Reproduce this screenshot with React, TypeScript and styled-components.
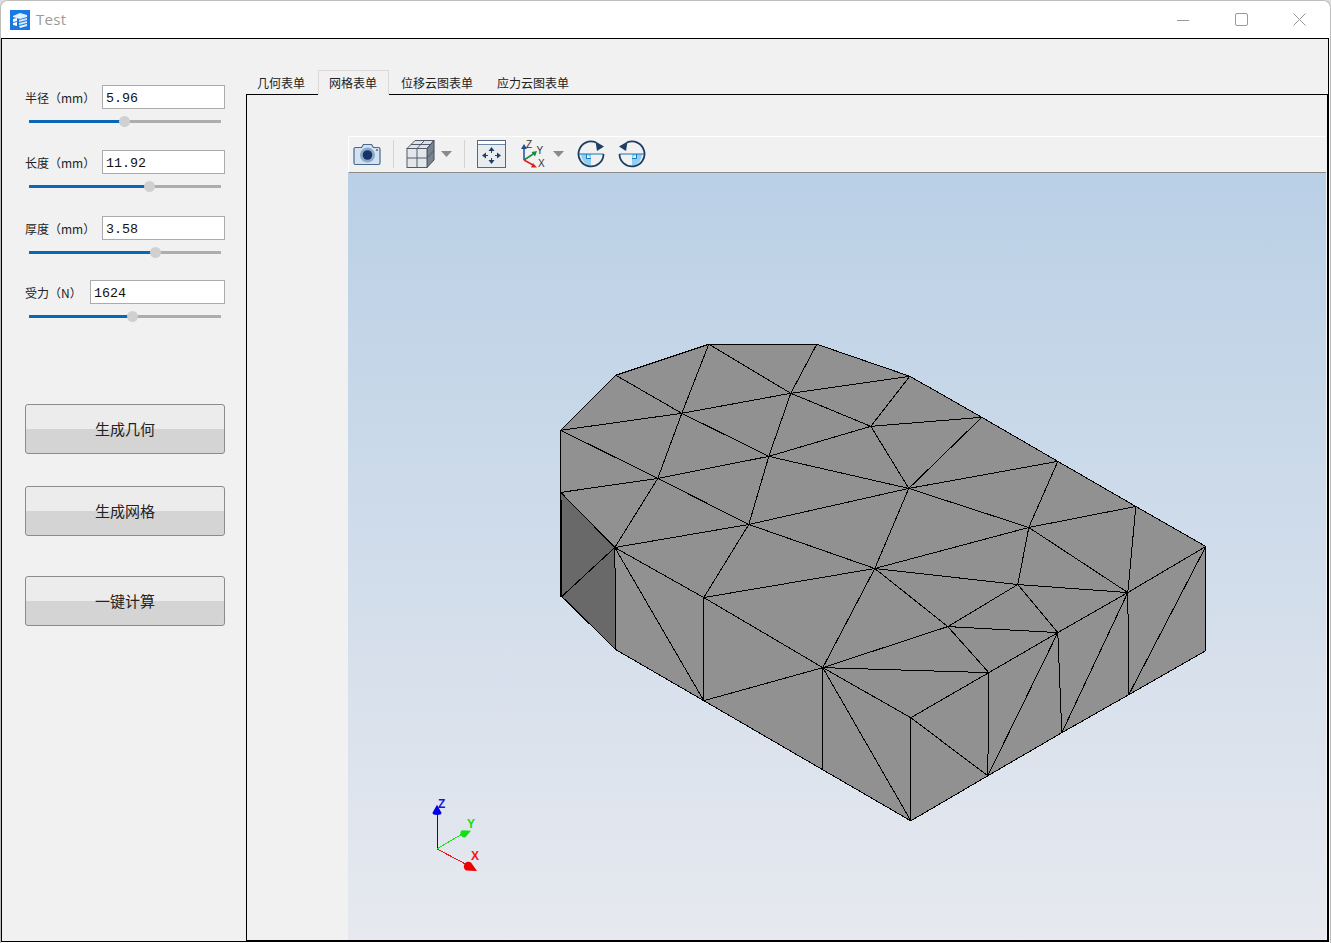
import React from 'react';
import styled, { createGlobalStyle } from 'styled-components';

const Global = createGlobalStyle`
  html, body { margin: 0; padding: 0; background: #dcdcdc; }
  body { font-family: "Noto Sans CJK SC", "Noto Sans", sans-serif; overflow: hidden; }
`;

const Win = styled.div`
  width: 1331px; height: 943px; box-sizing: border-box;
  display: flex; flex-direction: column;
  background: #fff; border: 1px solid #bdbdbd; border-bottom: 0;
  border-radius: 8px 8px 0 0; overflow: hidden;
`;
const TitleBar = styled.div`
  height: 37px; flex: none; display: flex; align-items: center; padding-left: 9px; background: #fff;
`;
const AppTitle = styled.span`
  font-family: "Open Sans", "Noto Sans", sans-serif; font-size: 15px; color: #9b9b9b; margin: 0 0 2px 6px; letter-spacing: .3px;
`;
const WinButtons = styled.div`
  margin-left: auto; display: flex; margin-right: 1px;
`;
const WinBtn = styled.div`
  width: 58.5px; height: 35px; display: flex; align-items: center; justify-content: center;
  svg { display: block; }
`;
const Body = styled.div`
  flex: 1; min-height: 0; display: flex; background: #f1f1f1;
  border: 1px solid #000; margin-bottom: 1px; margin-right: 1px;
`;
const Side = styled.div`
  width: 243px; flex: none; box-sizing: border-box; padding: 46px 20px 0 23px; display: flex; flex-direction: column;
`;
const Group = styled.div<{ $mt: number }>`
  margin-top: ${p => p.$mt}px;
`;
const FieldRow = styled.div`
  display: flex; align-items: center; height: 24px;
`;
const Label = styled.label<{ $w: number }>`
  width: ${p => p.$w}px; flex: none; font-size: 12px; color: #222; white-space: nowrap; line-height: 24px; padding-top: 2px;
`;
const Input = styled.input`
  flex: 1; min-width: 0; height: 24px; box-sizing: border-box; border: 1px solid #ababab; background: #fff;
  font-family: "Liberation Mono", monospace; font-size: 13.33px; color: #111; padding: 3px 3px 0; outline: none; border-radius: 0;
`;
const SliderWrap = styled.div`
  height: 24px; position: relative; margin: 0 4px; display: flex; align-items: center;
`;
const Track = styled.div`
  width: 100%; height: 3px; background: #adadad;
`;
const Fill = styled.div`
  height: 3px; background: #0a66b7;
`;
const Thumb = styled.div`
  position: absolute; top: 7px; width: 11px; height: 11px; margin-left: -5px; border-radius: 50%;
  background: #d0d0d0;
`;
const ActionBtn = styled.button<{ $mt: number }>`
  margin-top: ${p => p.$mt}px; height: 50px; width: 200px; box-sizing: border-box; flex: none;
  border: 1px solid #8b8b8b; border-radius: 3px; padding: 0 0 1px;
  background: linear-gradient(#ececec 0, #ececec 51%, #d4d4d4 51%, #d4d4d4 100%);
  font-family: "Noto Sans CJK SC", sans-serif; font-size: 15px; color: #222; font-weight: 400; line-height: 47px;
`;
const Right = styled.div`
  flex: 1; min-width: 0; display: flex; flex-direction: column; padding-top: 31px;
`;
const TabBar = styled.div`
  display: flex; height: 25px; flex: none; align-items: flex-end; position: relative; z-index: 1;
`;
const Tab = styled.div<{ $active?: boolean }>`
  height: 25px; box-sizing: border-box; padding: 0 ${p => (p.$active ? '11px 0 10px' : '12px')};
  margin-left: ${p => (p.$active ? 1 : 0)}px;
  font-size: 12px; color: #222; line-height: ${p => (p.$active ? 24 : 26)}px; white-space: nowrap;
  ${p => (p.$active ? 'border: 1px solid #d9d9d9; border-bottom: 1px solid #f1f1f1; background: #f1f1f1;' : '')}
`;
const Pane = styled.div`
  flex: 1; min-height: 0; margin-left: 1px; margin-top: -1px; border: 1px solid #000;
  padding: 41px 1px 0 101px; display: flex; flex-direction: column; background: #f1f1f1;
`;
const Toolbar = styled.div`
  height: 37px; flex: none; box-sizing: border-box; display: flex; align-items: center; padding: 0 0 2px 4px;
  background: #f1f1f1; border-top: 1px solid #fff; border-left: 1px solid #fff; border-bottom: 1px solid #8a8a8a;
`;
const Tool = styled.svg<{ $ml: number; $w: number }>`
  display: block; flex: none; width: ${p => p.$w}px; height: 30px; margin-left: ${p => p.$ml}px;
`;
const ToolSep = styled.div<{ $ml: number }>`
  width: 1px; height: 28px; flex: none; background: #d4d4d4; margin-left: ${p => p.$ml}px;
`;
const Canvas = styled.div`
  flex: 1; min-height: 0; background: linear-gradient(#bad0e6 0%, #e7e9ef 100%);
  svg { display: block; width: 100%; height: 100%; }
`;

type Pt = [number, number];
const V: Record<string, Pt> = {
  A: [561, 430], B: [616, 375], C: [709, 344], D: [817, 344], E: [910, 376], F: [982, 417], G: [1058, 461], H: [1136, 506], I: [1206, 546],
  J: [1206, 650], K: [1129, 694], L: [1062, 732], M: [988, 775], N: [911, 820], O: [823, 769], P: [704, 700], Q: [616, 649], R: [562, 596], S: [561, 492],
  a: [682, 413], b: [791, 393], c: [871, 426], d: [769, 456], e: [658, 478], f: [749, 524], g: [615, 547], h: [875, 568],
  i: [909, 488], j: [1029, 527], k: [1018, 584], l: [1128, 592], m: [704, 597], n: [948, 626], o: [1058, 632], p: [823, 667], q: [989, 672], r: [911, 717],
};
const EDGES = 'B-a C-a C-b D-b E-b A-a a-b b-c E-c c-F b-d a-d c-d c-i F-i d-i G-i G-j H-j i-j a-e d-e A-e S-e d-f e-f e-g S-g g-f i-f i-h f-h f-m g-m m-h h-j h-k j-k j-l k-l H-l I-l h-n h-p p-m p-n k-n k-o n-o n-q l-o o-q p-q p-r q-r g-Q g-P m-P P-p p-O p-N r-N r-M q-M o-M o-L l-L l-K I-K I-J g-R'
  .split(' ').map(s => s.split('-'));
const poly = (ks: string) => ks.split(' ').map(k => V[k].join(',')).join(' ');

const Mesh = () => (
  <svg viewBox="348 173 978 766" preserveAspectRatio="none">
    <g shapeRendering="crispEdges" transform="translate(-0.2 0)">
      <polygon points={poly('A B C D E F G H I J K L M N O P Q g S')} fill="#919191" stroke="#000" />
      <polygon points={poly('S g Q R')} fill="#696969" stroke="#000" />
      <line x1="560.6" y1="430" x2="560.6" y2="596" stroke="#000" />
      <line x1="561.6" y1="500" x2="561.6" y2="570" stroke="#000" />
      {EDGES.map(([a, b]) => (
        <line key={a + b} x1={V[a][0]} y1={V[a][1]} x2={V[b][0]} y2={V[b][1]} stroke="#000" />
      ))}
    </g>
    <g shapeRendering="crispEdges">
      <line x1="437" y1="848" x2="437" y2="812" stroke="#0000e6" />
      <line x1="437" y1="848" x2="464" y2="832" stroke="#19e619" />
      <line x1="437" y1="848" x2="469" y2="865" stroke="#e61919" />
    </g>
    <path d="M437 804 L441.5 812 A4.5 2.2 0 0 1 432.5 812 Z" fill="#0000e6" />
    <path d="M471 830 L465.5 836.5 A4 4 0 0 1 462 829.5 Z" fill="#12e012" />
    <path d="M477 870 L466 869.5 A4.5 4.5 0 0 1 471 861.5 Z" fill="#ee0000" />
    <g fontFamily="Liberation Sans, sans-serif" fontWeight="700" fontSize="12">
      <text x="438" y="807" fill="#1414e0">Z</text>
      <text x="467" y="827" fill="#14dc14">Y</text>
      <text x="471" y="859" fill="#f01414">X</text>
    </g>
  </svg>
);

const Logo = () => (
  <svg width="20" height="20" viewBox="0 0 20 20">
    <rect width="20" height="20" fill="#1a78e2" />
    <polygon points="3,6 10,3 17,5 17,7 10,9 3,7" fill="#dff0ff" />
    <polygon points="3,9 7,8 7,11 3,12" fill="#fff" />
    <polygon points="9,10 17,8 17,10 9,12" fill="#cfe6ff" />
    <polygon points="3,13 7,12 7,16 3,15" fill="#fff" />
    <polygon points="9,13 17,11 17,13 9,15" fill="#cfe6ff" />
    <polygon points="9,16 17,14 17,16 10,18" fill="#eaf4ff" />
  </svg>
);

const Camera = () => (
  <Tool $ml={0} $w={29} viewBox="0 0 29 30">
    <path d="M2.5 8.5 h6 l2 -3 h8 l2 3 h5 a1.5 1.5 0 0 1 1.5 1.5 v14 a1.5 1.5 0 0 1 -1.5 1.5 h-23 a1.5 1.5 0 0 1 -1.5 -1.5 v-14 a1.5 1.5 0 0 1 1.5 -1.5z" fill="#d3e2f1" stroke="#48688f" strokeWidth="1.2" />
    <circle cx="14.5" cy="16" r="7.5" fill="#8ea9c8" />
    <circle cx="14.5" cy="16" r="4.8" fill="#17346a" />
    <circle cx="24" cy="11" r="1" fill="#48688f" />
  </Tool>
);
const Cube = () => (
  <Tool $ml={12} $w={29} viewBox="0 0 29 30">
    <polygon points="1,9.5 9,1.5 28,1.5 21,9.5" fill="#dfe3e8" stroke="#505a68" />
    <polygon points="21,9.5 28,1.5 28,21 21,28.5" fill="#77838f" stroke="#414b58" />
    <rect x="1" y="9.5" width="20" height="19" fill="#e4e7ea" stroke="#505a68" />
    <path d="M11 9.5 V28.5 M1 19 H21 M11 9.5 L18.5 1.5 M5 5.5 H24.5 M21 19 L28 11.5" fill="none" stroke="#505a68" />
  </Tool>
);
const Drop = ({ ml }: { ml: number }) => (
  <Tool $ml={ml} $w={11} viewBox="0 0 11 30">
    <polygon points="0,12 11,12 5.5,18" fill="#8a8a8a" />
  </Tool>
);
const Fit = () => (
  <Tool $ml={12} $w={29} viewBox="0 0 29 30" shapeRendering="crispEdges">
    <rect x="0.5" y="1.5" width="28" height="27" fill="#e9ecef" stroke="#4f6987" />
    <rect x="1" y="2" width="27" height="3" fill="#fff" />
    <line x1="1" y1="5.5" x2="28" y2="5.5" stroke="#6f86a1" />
    <g fill="#1d3d6b" shapeRendering="auto">
      <polygon points="14.5,8 17.5,12 11.5,12" /><polygon points="14.5,25 17.5,21 11.5,21" />
      <polygon points="5,16.5 9,13.5 9,19.5" /><polygon points="24,16.5 20,13.5 20,19.5" />
      <rect x="14" y="12" width="1" height="2" /><rect x="14" y="19" width="1" height="2" />
      <rect x="9" y="16" width="2" height="1" /><rect x="18" y="16" width="2" height="1" />
    </g>
  </Tool>
);
const Triad = () => (
  <Tool $ml={15} $w={26} viewBox="0 0 26 30">
    <path d="M3 21 V9" stroke="#1f4e9c" strokeWidth="1.5" fill="none" />
    <polygon points="3,5 6,10 0,10" fill="#1f4e9c" />
    <path d="M3 21 L13 14.5" stroke="#1a8a3c" strokeWidth="1.5" fill="none" />
    <polygon points="16,12 14,17.5 10.5,13" fill="#1a8a3c" />
    <path d="M3 21 L12 26" stroke="#e02020" strokeWidth="1.5" fill="none" />
    <polygon points="16,28.5 10,28.5 12,24" fill="#e02020" />
    <g fontFamily="Liberation Sans, sans-serif" fontSize="10" fill="#333">
      <text x="5" y="9">Z</text><text x="15.5" y="14.5">Y</text><text x="17" y="28">X</text>
    </g>
  </Tool>
);
const Rotate = ({ ml, flip }: { ml: number; flip?: boolean }) => (
  <Tool $ml={ml} $w={28} viewBox="0 0 28 30">
    <g transform={flip ? 'translate(28 0) scale(-1 1)' : undefined}>
      <path d="M4 15 H14 V27.5 A12.5 12.5 0 0 1 4 15z" fill="#8fd0f2" />
      <path d="M9.5 15 V19.5 H14" fill="#e6f5fd" stroke="#1278b8" strokeWidth="1" />
      <path d="M1.5 15 H26.5" stroke="#1278b8" strokeWidth="1" fill="none" />
      <path d="M26.5 15 A12.5 12.5 0 1 1 19 3.5" stroke="#1f3e63" strokeWidth="1.8" fill="none" />
      <polygon points="18.5,2.5 27,7.5 20,12" fill="#1f3e63" />
    </g>
  </Tool>
);

const FIELDS = [
  { label: '半径（mm）', value: '5.96', w: 77, mt: 0, pct: 49.6 },
  { label: '长度（mm）', value: '11.92', w: 77, mt: 17, pct: 62.5 },
  { label: '厚度（mm）', value: '3.58', w: 77, mt: 18, pct: 65.6 },
  { label: '受力（N）', value: '1624', w: 65, mt: 16, pct: 53.8 },
];
const ACTIONS = [
  { t: '生成几何', mt: 76 }, { t: '生成网格', mt: 32 }, { t: '一键计算', mt: 40 },
];

export default function App() {
  return (
    <Win>
      <Global />
      <TitleBar>
        <Logo />
        <AppTitle>Test</AppTitle>
        <WinButtons>
          <WinBtn><svg width="12" height="12" viewBox="0 0 12 12"><path d="M0 6.5H12" stroke="#999" /></svg></WinBtn>
          <WinBtn><svg width="13" height="13" viewBox="0 0 13 13"><rect x=".5" y=".5" width="12" height="12" rx="1.5" fill="none" stroke="#999" /></svg></WinBtn>
          <WinBtn><svg width="13" height="13" viewBox="0 0 13 13"><path d="M.5 .5L12.5 12.5M12.5 .5L.5 12.5" stroke="#999" fill="none" /></svg></WinBtn>
        </WinButtons>
      </TitleBar>
      <Body>
        <Side>
          {FIELDS.map(f => (
            <Group key={f.label} $mt={f.mt}>
              <FieldRow>
                <Label $w={f.w}>{f.label}</Label>
                <Input defaultValue={f.value} />
              </FieldRow>
              <SliderWrap>
                <Track><Fill style={{ width: `${f.pct}%` }} /></Track>
                <Thumb style={{ left: `${f.pct}%` }} />
              </SliderWrap>
            </Group>
          ))}
          {ACTIONS.map(a => <ActionBtn key={a.t} $mt={a.mt}>{a.t}</ActionBtn>)}
        </Side>
        <Right>
          <TabBar>
            <Tab>几何表单</Tab>
            <Tab $active>网格表单</Tab>
            <Tab>位移云图表单</Tab>
            <Tab>应力云图表单</Tab>
          </TabBar>
          <Pane>
            <Toolbar>
              <Camera />
              <ToolSep $ml={11} />
              <Cube />
              <Drop ml={6} />
              <ToolSep $ml={12} />
              <Fit />
              <Triad />
              <Drop ml={6} />
              <Rotate ml={13} />
              <Rotate ml={13} flip />
            </Toolbar>
            <Canvas><Mesh /></Canvas>
          </Pane>
        </Right>
      </Body>
    </Win>
  );
}
